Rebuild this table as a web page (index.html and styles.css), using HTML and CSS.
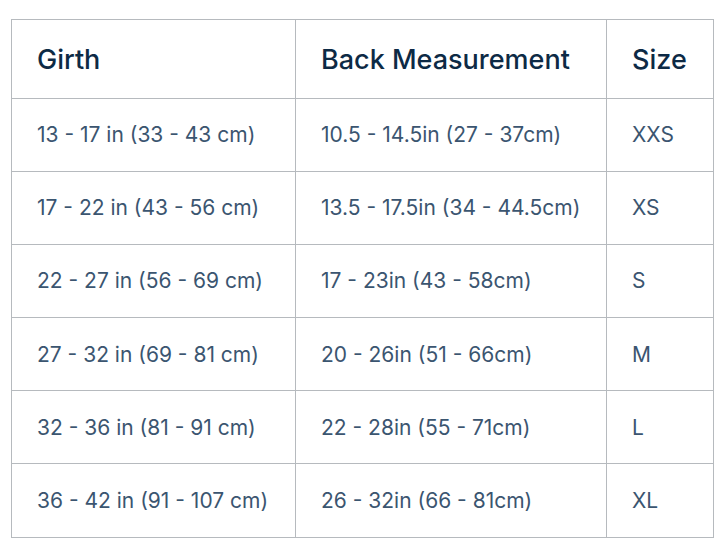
FILE: index.html
```html
<!DOCTYPE html>
<html>
<head>
<meta charset="utf-8">
<link rel="stylesheet" href="styles.css">
</head>
<body>
<table class="size-table">
  <colgroup><col class="c1"><col class="c2"><col class="c3"></colgroup>
  <thead>
    <tr><th>Girth</th><th>Back Measurement</th><th>Size</th></tr>
  </thead>
  <tbody>
    <tr><td>13 - 17 in (33 - 43 cm)</td><td>10.5 - 14.5in (27 - 37cm)</td><td>XXS</td></tr>
    <tr><td>17 - 22 in (43 - 56 cm)</td><td>13.5 - 17.5in (34 - 44.5cm)</td><td>XS</td></tr>
    <tr><td>22 - 27 in (56 - 69 cm)</td><td>17 - 23in (43 - 58cm)</td><td>S</td></tr>
    <tr><td>27 - 32 in (69 - 81 cm)</td><td>20 - 26in (51 - 66cm)</td><td>M</td></tr>
    <tr><td>32 - 36 in (81 - 91 cm)</td><td>22 - 28in (55 - 71cm)</td><td>L</td></tr>
    <tr><td>36 - 42 in (91 - 107 cm)</td><td>26 - 32in (66 - 81cm)</td><td>XL</td></tr>
  </tbody>
</table>
</body>
</html>
```
FILE: styles.css
```css
html, body {
  margin: 0;
  padding: 0;
  background: #ffffff;
}
body {
  padding: 19px 0 0 11px;
  font-family: Inter, "Noto Sans", sans-serif;
}
.size-table {
  border-collapse: collapse;
  width: 702px;
  table-layout: fixed;
}
.size-table th, .size-table td {
  border: 1.5px solid #b6babe;
  text-align: left;
  padding: 0 0 0 25px;
  white-space: nowrap;
}
.size-table th {
  height: 75.5px;
  padding-top: 2px;
  font-size: 27px;
  font-weight: 500;
  color: #0d2a45;
}
.size-table td {
  height: 72.2px;
  font-size: 21px;
  font-weight: 400;
  color: #3b5570;
}
.c1 { width: 284px; }
.c2 { width: 311px; }
.c3 { width: 107px; }
```
